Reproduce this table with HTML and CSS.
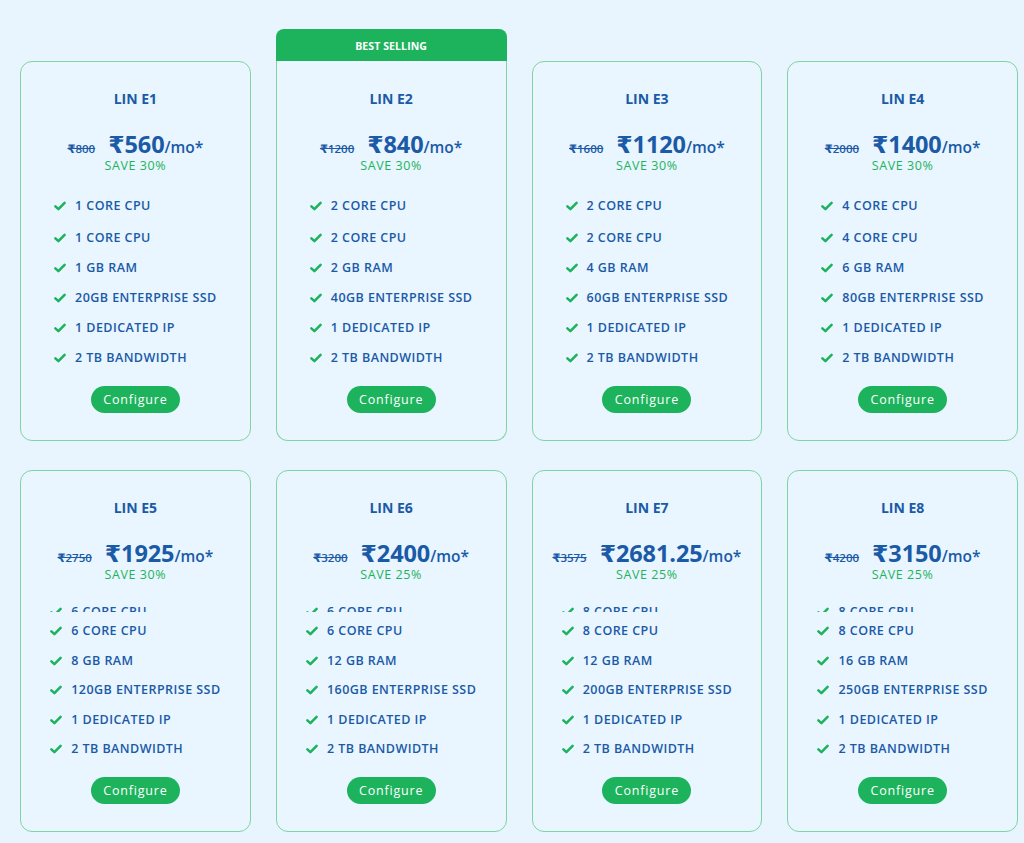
FILE: index.html
```html
<!DOCTYPE html>
<html lang="en">
<head>
<meta charset="utf-8">
<title>Plans</title>
<link rel="stylesheet" href="styles.css">
</head>
<body>
<svg width="0" height="0" class="defs">
  <symbol id="chk" viewBox="0 0 12 10"><path d="M1.4 5.4 L4.4 8.2 L10.6 1.8" fill="none" stroke="#1db35c" stroke-width="2.5" stroke-linecap="round" stroke-linejoin="round"/></symbol>
</svg>
<main class="grid">
  <section class="card top">
    <h2 class="name">LIN E1</h2>
    <div class="price"><s class="old">₹800</s><span class="now">₹560</span><span class="per">/mo*</span></div>
    <div class="save">SAVE 30%</div>
    <ul class="feats">
      <li><svg class="ck"><use href="#chk"/></svg>1 CORE CPU</li>
      <li><svg class="ck"><use href="#chk"/></svg>1 CORE CPU</li>
      <li><svg class="ck"><use href="#chk"/></svg>1 GB RAM</li>
      <li><svg class="ck"><use href="#chk"/></svg>20GB ENTERPRISE SSD</li>
      <li><svg class="ck"><use href="#chk"/></svg>1 DEDICATED IP</li>
      <li><svg class="ck"><use href="#chk"/></svg>2 TB BANDWIDTH</li>
    </ul>
    <button class="btn">Configure</button>
  </section>
  <div class="featured">
    <div class="ribbon">BEST SELLING</div>
    <section class="card flat">
      <h2 class="name">LIN E2</h2>
      <div class="price"><s class="old">₹1200</s><span class="now">₹840</span><span class="per">/mo*</span></div>
      <div class="save">SAVE 30%</div>
      <ul class="feats">
        <li><svg class="ck"><use href="#chk"/></svg>2 CORE CPU</li>
        <li><svg class="ck"><use href="#chk"/></svg>2 CORE CPU</li>
        <li><svg class="ck"><use href="#chk"/></svg>2 GB RAM</li>
        <li><svg class="ck"><use href="#chk"/></svg>40GB ENTERPRISE SSD</li>
        <li><svg class="ck"><use href="#chk"/></svg>1 DEDICATED IP</li>
        <li><svg class="ck"><use href="#chk"/></svg>2 TB BANDWIDTH</li>
      </ul>
      <button class="btn">Configure</button>
    </section>
  </div>
  <section class="card top">
    <h2 class="name">LIN E3</h2>
    <div class="price"><s class="old">₹1600</s><span class="now">₹1120</span><span class="per">/mo*</span></div>
    <div class="save">SAVE 30%</div>
    <ul class="feats">
      <li><svg class="ck"><use href="#chk"/></svg>2 CORE CPU</li>
      <li><svg class="ck"><use href="#chk"/></svg>2 CORE CPU</li>
      <li><svg class="ck"><use href="#chk"/></svg>4 GB RAM</li>
      <li><svg class="ck"><use href="#chk"/></svg>60GB ENTERPRISE SSD</li>
      <li><svg class="ck"><use href="#chk"/></svg>1 DEDICATED IP</li>
      <li><svg class="ck"><use href="#chk"/></svg>2 TB BANDWIDTH</li>
    </ul>
    <button class="btn">Configure</button>
  </section>
  <section class="card top">
    <h2 class="name">LIN E4</h2>
    <div class="price"><s class="old">₹2000</s><span class="now">₹1400</span><span class="per">/mo*</span></div>
    <div class="save">SAVE 30%</div>
    <ul class="feats">
      <li><svg class="ck"><use href="#chk"/></svg>4 CORE CPU</li>
      <li><svg class="ck"><use href="#chk"/></svg>4 CORE CPU</li>
      <li><svg class="ck"><use href="#chk"/></svg>6 GB RAM</li>
      <li><svg class="ck"><use href="#chk"/></svg>80GB ENTERPRISE SSD</li>
      <li><svg class="ck"><use href="#chk"/></svg>1 DEDICATED IP</li>
      <li><svg class="ck"><use href="#chk"/></svg>2 TB BANDWIDTH</li>
    </ul>
    <button class="btn">Configure</button>
  </section>

  <section class="card">
    <h2 class="name">LIN E5</h2>
    <div class="price"><s class="old">₹2750</s><span class="now">₹1925</span><span class="per">/mo*</span></div>
    <div class="save">SAVE 30%</div>
    <ul class="feats clip">
      <li class="peek"><svg class="ck"><use href="#chk"/></svg>6 CORE CPU</li>
      <li><svg class="ck"><use href="#chk"/></svg>6 CORE CPU</li>
      <li><svg class="ck"><use href="#chk"/></svg>8 GB RAM</li>
      <li><svg class="ck"><use href="#chk"/></svg>120GB ENTERPRISE SSD</li>
      <li><svg class="ck"><use href="#chk"/></svg>1 DEDICATED IP</li>
      <li><svg class="ck"><use href="#chk"/></svg>2 TB BANDWIDTH</li>
    </ul>
    <button class="btn">Configure</button>
  </section>
  <section class="card">
    <h2 class="name">LIN E6</h2>
    <div class="price"><s class="old">₹3200</s><span class="now">₹2400</span><span class="per">/mo*</span></div>
    <div class="save">SAVE 25%</div>
    <ul class="feats clip">
      <li class="peek"><svg class="ck"><use href="#chk"/></svg>6 CORE CPU</li>
      <li><svg class="ck"><use href="#chk"/></svg>6 CORE CPU</li>
      <li><svg class="ck"><use href="#chk"/></svg>12 GB RAM</li>
      <li><svg class="ck"><use href="#chk"/></svg>160GB ENTERPRISE SSD</li>
      <li><svg class="ck"><use href="#chk"/></svg>1 DEDICATED IP</li>
      <li><svg class="ck"><use href="#chk"/></svg>2 TB BANDWIDTH</li>
    </ul>
    <button class="btn">Configure</button>
  </section>
  <section class="card">
    <h2 class="name">LIN E7</h2>
    <div class="price"><s class="old">₹3575</s><span class="now">₹2681.25</span><span class="per">/mo*</span></div>
    <div class="save">SAVE 25%</div>
    <ul class="feats clip">
      <li class="peek"><svg class="ck"><use href="#chk"/></svg>8 CORE CPU</li>
      <li><svg class="ck"><use href="#chk"/></svg>8 CORE CPU</li>
      <li><svg class="ck"><use href="#chk"/></svg>12 GB RAM</li>
      <li><svg class="ck"><use href="#chk"/></svg>200GB ENTERPRISE SSD</li>
      <li><svg class="ck"><use href="#chk"/></svg>1 DEDICATED IP</li>
      <li><svg class="ck"><use href="#chk"/></svg>2 TB BANDWIDTH</li>
    </ul>
    <button class="btn">Configure</button>
  </section>
  <section class="card">
    <h2 class="name">LIN E8</h2>
    <div class="price"><s class="old">₹4200</s><span class="now">₹3150</span><span class="per">/mo*</span></div>
    <div class="save">SAVE 25%</div>
    <ul class="feats clip">
      <li class="peek"><svg class="ck"><use href="#chk"/></svg>8 CORE CPU</li>
      <li><svg class="ck"><use href="#chk"/></svg>8 CORE CPU</li>
      <li><svg class="ck"><use href="#chk"/></svg>16 GB RAM</li>
      <li><svg class="ck"><use href="#chk"/></svg>250GB ENTERPRISE SSD</li>
      <li><svg class="ck"><use href="#chk"/></svg>1 DEDICATED IP</li>
      <li><svg class="ck"><use href="#chk"/></svg>2 TB BANDWIDTH</li>
    </ul>
    <button class="btn">Configure</button>
  </section>
</main>
</body>
</html>
```
FILE: styles.css
```css
html, body {
  margin: 0;
  padding: 0;
  background: #e8f4fe;
}
body {
  font-family: "Open Sans", "DejaVu Sans", sans-serif;
  color: #1a5aa6;
  height: 843px;
  overflow: hidden;
}
.defs {
  position: absolute;
  width: 0;
  height: 0;
}
.grid {
  display: grid;
  grid-template-columns: repeat(4, 1fr);
  column-gap: 25px;
  row-gap: 29px;
  padding: 29px 6px 0 20px;
  align-items: start;
}
.card {
  box-sizing: border-box;
  background: #e9f5ff;
  border: 1px solid #7fd4a2;
  border-radius: 12px;
  padding: 28px 8px 27px;
  display: flex;
  flex-direction: column;
  align-items: center;
}
.card.top {
  margin-top: 32px;
}
.card.flat {
  border-top-left-radius: 0;
  border-top-right-radius: 0;
  border-top: none;
  padding-top: 29px;
}
.featured {
  display: flex;
  flex-direction: column;
}
.ribbon {
  height: 32px;
  background: #1db35c;
  color: #fff;
  border-radius: 8px 8px 0 0;
  font-size: 10.5px;
  font-weight: 700;
  display: flex;
  align-items: center;
  justify-content: center;
  letter-spacing: 0.1px;
  padding-top: 1px;
  box-sizing: border-box;
}
.name {
  margin: 0;
  font-size: 14px;
  line-height: 18px;
  font-weight: 700;
  color: #1a5aa6;
}
.price {
  margin-top: 22px;
  height: 28px;
  display: flex;
  align-items: baseline;
  justify-content: center;
  line-height: 28px;
  white-space: nowrap;
}
.old {
  font-size: 11.5px;
  font-weight: 600;
  margin-right: 13px;
}
.now {
  font-size: 23.5px;
  font-weight: 700;
  letter-spacing: -0.1px;
}
.per {
  font-size: 15.5px;
  font-weight: 600;
}
.save {
  margin-top: 2px;
  font-size: 12.5px;
  line-height: 12px;
  font-weight: 500;
  letter-spacing: 0.6px;
  color: #1db35c;
}
.feats {
  list-style: none;
  margin: 25px 0 0;
  padding: 0;
}
.feats li {
  display: flex;
  align-items: center;
  height: 18px;
  line-height: 18px;
  margin-bottom: 12px;
  font-size: 12.5px;
  font-weight: 600;
  letter-spacing: 0.45px;
  white-space: nowrap;
}
.feats li:first-child {
  margin-bottom: 14px;
}
.feats li:last-child {
  margin-bottom: 0;
}
.feats.clip {
  margin-top: 22px;
}
.feats.clip li {
  margin-bottom: 11.5px;
}
.feats.clip li.peek {
  height: 9px;
  overflow: hidden;
  align-items: flex-start;
  margin-bottom: 10px;
}
.feats.clip li:last-child {
  margin-bottom: 0;
}
.ck {
  width: 12px;
  height: 10px;
  margin-right: 9px;
  flex: none;
}
.feats.clip li.peek .ck {
  margin-top: 4px;
}
.btn {
  margin-top: 19px;
  width: 89px;
  height: 27px;
  border: none;
  border-radius: 14px;
  background: #1db35c;
  color: #fff;
  font-family: inherit;
  font-size: 12.5px;
  font-weight: 500;
  letter-spacing: 0.8px;
  padding: 0;
}
```
